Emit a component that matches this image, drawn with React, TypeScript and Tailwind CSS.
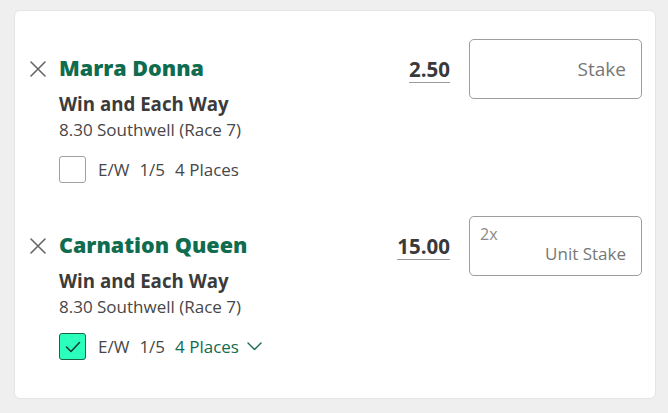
import React from "react";

interface Selection {
  name: string;
  market: string;
  event: string;
  odds: string;
  eachWay: boolean;
  terms: string;
  places: string;
  multiplier?: string;
  stakeLabel: string;
}

const selections: Selection[] = [
  {
    name: "Marra Donna",
    market: "Win and Each Way",
    event: "8.30 Southwell (Race 7)",
    odds: "2.50",
    eachWay: false,
    terms: "1/5",
    places: "4 Places",
    stakeLabel: "Stake",
  },
  {
    name: "Carnation Queen",
    market: "Win and Each Way",
    event: "8.30 Southwell (Race 7)",
    odds: "15.00",
    eachWay: true,
    terms: "1/5",
    places: "4 Places",
    multiplier: "2x",
    stakeLabel: "Unit Stake",
  },
];

const CloseIcon = () => (
  <svg width="16" height="16" viewBox="0 0 16 16" fill="none">
    <path d="M1 1L15 15M15 1L1 15" stroke="#666" strokeWidth="1.6" strokeLinecap="round" />
  </svg>
);

const Checkbox: React.FC<{ checked: boolean }> = ({ checked }) =>
  checked ? (
    <span className="flex h-[27px] w-[27px] shrink-0 items-center justify-center rounded-[3px] border border-[#146847] bg-[#2affbb]">
      <svg width="16" height="12" viewBox="0 0 16 12" fill="none">
        <path d="M1.5 6L6 10.5L14.5 1.5" stroke="#153c30" strokeWidth="1.6" strokeLinecap="round" strokeLinejoin="round" />
      </svg>
    </span>
  ) : (
    <span className="h-[27px] w-[27px] shrink-0 rounded-[3px] border border-[#a0a0a0] bg-white" />
  );

const Chevron = () => (
  <svg width="15" height="9" viewBox="0 0 15 9" fill="none">
    <path d="M1 1L7.5 7.5L14 1" stroke="#136a4e" strokeWidth="1.4" strokeLinecap="round" strokeLinejoin="round" />
  </svg>
);

const BetRow: React.FC<{ sel: Selection }> = ({ sel }) => (
  <div className="flex items-start justify-between">
    <div className="mt-[15px] flex gap-[13px]">
      <div className="mt-[7px] shrink-0">
        <CloseIcon />
      </div>
      <div className="flex flex-col">
        <div className="text-[21.5px] leading-[28px] font-extrabold text-[#0f6c4f]">{sel.name}</div>
        <div className="mt-[10px] text-[18.7px] leading-[24px] font-bold text-[#3b3b3b]">{sel.market}</div>
        <div className="mt-[3px] text-[17px] leading-[22px] text-[#474747]">{sel.event}</div>
        <div className="mt-[15px] flex items-center gap-[12px] text-[17px] leading-[22px] text-[#474747]">
          <Checkbox checked={sel.eachWay} />
          <div className="flex items-center gap-[10px]">
            <span>E/W</span>
            <span>{sel.terms}</span>
            {sel.eachWay ? (
              <span className="flex items-center gap-[8px] text-[#136a4e]">
                {sel.places}
                <Chevron />
              </span>
            ) : (
              <span>{sel.places}</span>
            )}
          </div>
        </div>
      </div>
    </div>
    <div className="flex items-start gap-[19px]">
      <span className="mt-[20px] border-b border-[#9a9a9a] pb-[3px] text-[20.5px] leading-[20px] font-bold text-[#3a3a3a]">
        {sel.odds}
      </span>
      {sel.multiplier ? (
        <div className="flex h-[60px] w-[173px] flex-col rounded-[5px] border border-[#9d9d9d] pt-[6px] pr-[15px] pl-[10px]">
          <span className="text-[16px] leading-[22px] text-[#8a8a8a]">{sel.multiplier}</span>
          <span className="-mt-[2px] text-right text-[17px] leading-[22px] text-[#777]">{sel.stakeLabel}</span>
        </div>
      ) : (
        <div className="flex h-[60px] w-[173px] items-center justify-end rounded-[5px] border border-[#9d9d9d] pr-[15px]">
          <span className="text-[19px] leading-[24px] text-[#777]">{sel.stakeLabel}</span>
        </div>
      )}
    </div>
  </div>
);

export default function App() {
  return (
    <div
      className="min-h-[413px] w-[668px] bg-[#efefef] pt-[10px] pr-[12px] pl-[14px]"
      style={{ fontFamily: '"Open Sans", "Noto Sans", sans-serif' }}
    >
      <div className="flex h-[389px] flex-col gap-[33px] rounded-md border border-[#e5e5e5] bg-white pt-[28px] pr-[13px] pl-[15px]">
        {selections.map((sel) => (
          <BetRow key={sel.name} sel={sel} />
        ))}
      </div>
    </div>
  );
}
